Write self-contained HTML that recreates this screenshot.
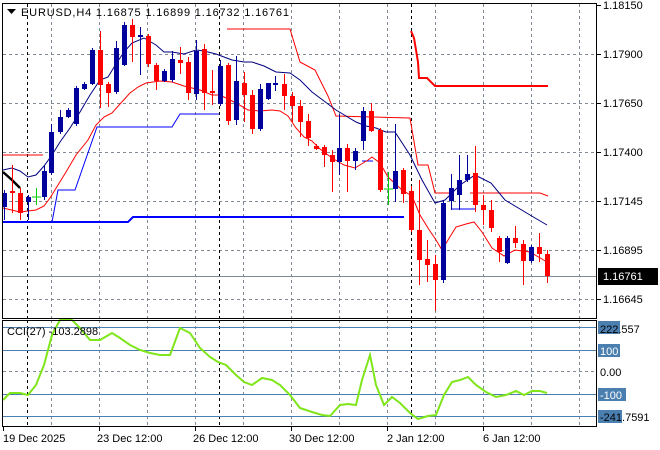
<!DOCTYPE html>
<html><head><meta charset="utf-8"><style>
html,body{margin:0;padding:0;background:#fff;}
svg{display:block;font-family:"Liberation Sans",sans-serif;font-size:11px;}
</style></head><body>
<svg width="660" height="450" viewBox="0 0 660 450" xmlns="http://www.w3.org/2000/svg">
<rect width="660" height="450" fill="#fff"/>
<g stroke="#7f8a95" stroke-dasharray="3,3" stroke-width="1" fill="none">
<path d="M3 54.5H596M3 103.5H596M3 152.5H596M3 201.5H596M3 250.5H596M3 299.5H596"/>
<path d="M51.5 4V318M99.5 4V318M147.5 4V318M195.5 4V318M243.5 4V318M291.5 4V318M339.5 4V318M387.5 4V318M435.5 4V318M483.5 4V318M531.5 4V318M579.5 4V318"/>
<path d="M51.5 320V426M99.5 320V426M147.5 320V426M195.5 320V426M243.5 320V426M291.5 320V426M339.5 320V426M387.5 320V426M435.5 320V426M483.5 320V426M531.5 320V426M579.5 320V426M3 371.5H596"/>
</g>
<g stroke="#000" stroke-dasharray="3,3" fill="none">
<path d="M27.5 4V318M219.5 4V318M411.5 4V318M27.5 320V426M219.5 320V426M411.5 320V426"/>
</g>
<line x1="3" y1="276.5" x2="596" y2="276.5" stroke="#7f8a95"/>
<polyline fill="none" stroke="#f00" points="3,155 43,155"/>
<polyline fill="none" stroke="#f00" points="227,29 290,29 300,62 315,70 328,96 336,116 410,118 418,165 428,165 435,193 450,193"/>
<polyline fill="none" stroke="#f00" points="470,193 540,193 548,196"/>
<polyline fill="none" stroke="#f00" stroke-width="2" points="411,31 414,38 418,62 419,78 427,78 435,86 548,86"/>
<polyline fill="none" stroke="#00f" stroke-width="2" points="3,222 128,222 133,217 404,217"/>
<polyline fill="none" stroke="#00f" points="52,222 58,190 75,190 97,127 172,127 180,114 219,114"/>
<polyline fill="none" stroke="#00f" points="362,161 373,161"/>
<polyline fill="none" stroke="#00f" points="451,209 475,209"/>
<polyline fill="none" stroke="#000080" points="3,170 12,168 20,171 28,177 36,175 44,166 52,155 60,142 70,128 80,112 90,95 100,80 108,77 116,64 124,52 132,43 144,38 156,45 164,52 172,52 184,54 196,50 204,51 216,54 232,60 244,62 252,62 264,66 276,72 290,73 300,80 312,92 324,101 336,110 346,116 356,122 366,126 376,128 386,132 395,132 410,155 422,180 435,203 445,200 460,185 475,175 491,183 505,200 530,215 547,225"/>
<polyline fill="none" stroke="#f00" points="3,208 20,212 36,210 44,206 50,198 58,185 66,172 76,155 88,140 96,125 104,117 112,113 120,104 130,93 138,87 146,83 160,81 172,82 184,86 200,90 212,95 220,95 236,103 248,110 260,111 272,110 280,111 288,116 296,128 304,137 312,141 320,149 332,158 344,165 355,168 368,160 372,157 380,163 388,177 402,190 412,196 420,215 428,228 436,240 442,250 448,240 456,227 466,224 474,222 482,232 492,248 504,256 515,250 530,252 547,262"/>
<polyline fill="none" stroke="#000" stroke-width="2.5" points="3,172 12,180 20,188"/>
<g>
<g stroke="#00009c"><path d="M4.5 190V220M28.5 195V220M44.5 165V200M51.5 124V175M60.5 110V134M68.5 108V118M76.5 86V126M84.5 82V90M92.5 48V85M116.5 41V94M124.5 22V66M140.5 27V75M164.5 69V82M172.5 51V82M196.5 40V100M220.5 60V106M236.5 56V125M260.5 84V131M268.5 83V100M275.5 76V91M339.5 114V175M355.5 148V170M363.5 107V150M395.5 124V202M443.5 200V283M451.5 174V210M459.5 155V210M467.5 155V182M507.5 236V264M531.5 245V263"/></g>
<g stroke="#f00"><path d="M12.5 165V213M20.5 188V220M100.5 31V108M108.5 82V107M132.5 19V62M148.5 34V67M156.5 63V90M180.5 47V74M188.5 57V100M204.5 44V110M212.5 70V105M228.5 63V125M244.5 72V122M252.5 90V134M284.5 74V110M292.5 92V122M300.5 100V137M308.5 114V146M316.5 144V150M324.5 145V167M332.5 150V192M347.5 144V192M371.5 103V132M380.5 128V192M403.5 168V203M411.5 186V232M419.5 180V285M427.5 240V282M435.5 255V311M475.5 146V212M483.5 195V225M491.5 200V232M499.5 236V262M515.5 226V248M523.5 240V285M539.5 233V262M547.5 250V283"/></g>
<g stroke="#0c0"><path d="M36.5 188V205M32 197H41M388.5 172V205M384 189H393"/></g>
<g fill="#00009c">
<rect x="2" y="193" width="5" height="14"/><rect x="26" y="197" width="5" height="5"/><rect x="42" y="171" width="5" height="26"/><rect x="49" y="132" width="5" height="41"/><rect x="58" y="117" width="5" height="15"/><rect x="66" y="110" width="5" height="7"/><rect x="74" y="88" width="5" height="36"/><rect x="82" y="84" width="5" height="5"/><rect x="90" y="50" width="5" height="34"/><rect x="114" y="48" width="5" height="44"/><rect x="122" y="25" width="5" height="40"/><rect x="138" y="35" width="5" height="2"/><rect x="162" y="71" width="5" height="10"/><rect x="170" y="59" width="5" height="21"/><rect x="194" y="51" width="5" height="43"/><rect x="218" y="66" width="5" height="38"/><rect x="234" y="81" width="5" height="39"/><rect x="258" y="89" width="5" height="40"/><rect x="266" y="83" width="5" height="16"/><rect x="273" y="83" width="5" height="2"/><rect x="337" y="148" width="5" height="14"/><rect x="353" y="151" width="5" height="10"/><rect x="361" y="111" width="5" height="30"/><rect x="393" y="171" width="5" height="18"/><rect x="441" y="203" width="5" height="77"/><rect x="449" y="188" width="5" height="13"/><rect x="457" y="180" width="5" height="15"/><rect x="465" y="174" width="5" height="6"/><rect x="505" y="238" width="5" height="25"/><rect x="529" y="247" width="5" height="14"/>
</g>
<g fill="#f00">
<rect x="10" y="191" width="5" height="2"/><rect x="18" y="193" width="5" height="20"/><rect x="98" y="50" width="5" height="35"/><rect x="106" y="84" width="5" height="9"/><rect x="130" y="25" width="5" height="12"/><rect x="146" y="36" width="5" height="28"/><rect x="154" y="65" width="5" height="16"/><rect x="178" y="60" width="5" height="3"/><rect x="186" y="62" width="5" height="31"/><rect x="202" y="49" width="5" height="44"/><rect x="210" y="91" width="5" height="2"/><rect x="226" y="65" width="5" height="56"/><rect x="242" y="83" width="5" height="12"/><rect x="250" y="95" width="5" height="34"/><rect x="282" y="84" width="5" height="12"/><rect x="290" y="96" width="5" height="10"/><rect x="298" y="106" width="5" height="16"/><rect x="306" y="121" width="5" height="17"/><rect x="314" y="146" width="5" height="3"/><rect x="322" y="147" width="5" height="8"/><rect x="330" y="155" width="5" height="7"/><rect x="345" y="148" width="5" height="13"/><rect x="369" y="111" width="5" height="20"/><rect x="378" y="130" width="5" height="60"/><rect x="401" y="170" width="5" height="24"/><rect x="409" y="191" width="5" height="39"/><rect x="417" y="230" width="5" height="30"/><rect x="425" y="259" width="5" height="6"/><rect x="433" y="264" width="5" height="16"/><rect x="473" y="173" width="5" height="32"/><rect x="481" y="205" width="5" height="5"/><rect x="489" y="210" width="5" height="18"/><rect x="497" y="238" width="5" height="14"/><rect x="513" y="238" width="5" height="5"/><rect x="521" y="244" width="5" height="17"/><rect x="537" y="247" width="5" height="7"/><rect x="545" y="254" width="5" height="22"/>
</g>
</g>
<g stroke="#4a7fb0" fill="none">
<path d="M3 327.5H596M3 350.5H596M3 394.5H596M3 416.5H596"/>
</g>
<polyline fill="none" stroke="#7fe61a" stroke-width="2" points="3,400 10,393 20,393 28,395 36,385 44,365 52,335 60,320 72,320 80,328 90,340 100,340 112,333 120,338 130,345 140,350 150,353 160,355 170,355 180,328 190,333 200,348 210,357 218,362 226,365 236,375 244,382 252,385 262,378 272,380 280,385 290,395 300,408 312,412 322,415 330,416 340,405 348,404 356,405 362,380 370,355 376,385 384,405 392,397 400,403 410,413 418,419 428,416 436,415 444,395 452,382 460,380 468,377 476,385 486,392 496,397 506,395 516,391 524,395 532,391 540,391 547,393"/>
<g fill="none" stroke="#000">
<rect x="2.5" y="3.5" width="594" height="315"/>
<rect x="2.5" y="320.5" width="594" height="106"/>
</g>
<g stroke="#000"><path d="M597 5.5H601M597 54.5H601M597 103.5H601M597 152.5H601M597 201.5H601M597 250.5H601M597 299.5H601M3.5 427V431M99.5 427V431M195.5 427V431M291.5 427V431M387.5 427V431M483.5 427V431"/></g>
<path d="M7 9H16L11.5 14Z" fill="#000"/>
<text x="21" y="16" fill="#000" textLength="268">EURUSD,H4  1.16875 1.16899 1.16732 1.16761</text>
<text x="7" y="335" fill="#000">CCI(27) -103.2898</text>
<g fill="#000">
<text x="603" y="9">1.18150</text><text x="603" y="58">1.17900</text><text x="603" y="107">1.17650</text><text x="603" y="156">1.17400</text><text x="603" y="205">1.17145</text><text x="603" y="254">1.16895</text><text x="603" y="303">1.16645</text>
</g>
<rect x="598" y="268" width="60" height="17" fill="#000"/>
<text x="603" y="280" fill="#fff">1.16761</text>
<rect x="598" y="321" width="22" height="13" fill="#4a7fb0"/>
<text x="600" y="333" fill="#000">222.557</text>
<rect x="598" y="344" width="22" height="13" fill="#4a7fb0"/>
<text x="600" y="355" fill="#fff">100</text>
<text x="600" y="376" fill="#000">0.00</text>
<rect x="598" y="388" width="28" height="13" fill="#4a7fb0"/>
<text x="600" y="399" fill="#fff">-100</text>
<rect x="598" y="410" width="24" height="13" fill="#4a7fb0"/>
<text x="600" y="421" fill="#000">-241.7591</text>
<g fill="#000">
<text x="3" y="442">19 Dec 2025</text><text x="97" y="442">23 Dec 12:00</text><text x="193" y="442">26 Dec 12:00</text><text x="289" y="442">30 Dec 12:00</text><text x="387" y="442">2 Jan 12:00</text><text x="483" y="442">6 Jan 12:00</text>
</g>
</svg>
</body></html>
